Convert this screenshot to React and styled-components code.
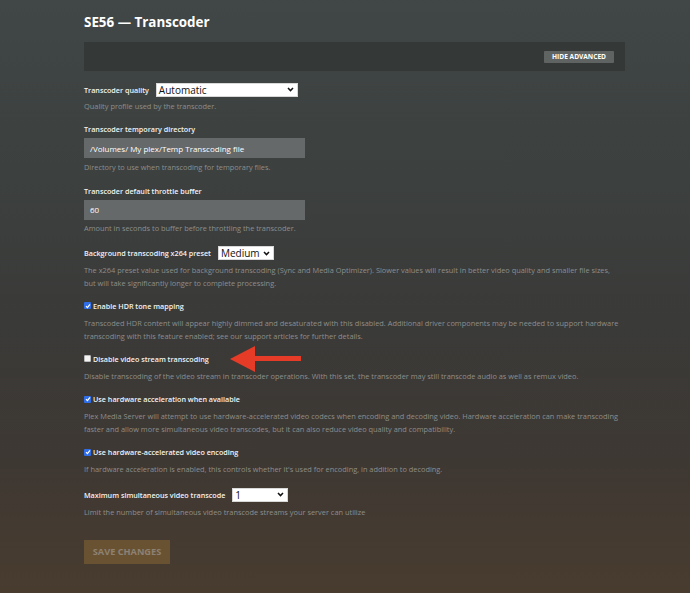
import React from 'react';
import styled, { createGlobalStyle } from 'styled-components';

const GlobalStyle = createGlobalStyle`
  html, body {
    margin: 0;
    padding: 0;
    height: 100%;
  }

  body {
    font-family: 'Open Sans', 'Noto Sans', sans-serif;
    background: #3b3d3b;
  }
`;

const Page = styled.div`
  min-height: 593px;
  box-sizing: border-box;
  padding: 13px 65px 30px 84px;
  background: linear-gradient(180deg, #404746 0%, #3c403f 30%, #3a3a38 55%, #3e3833 78%, #493c2f 100%);
`;

const Title = styled.h1`
  margin: 0;
  font-size: 13.4px;
  line-height: 18px;
  font-weight: 700;
  color: #fff;
`;

const AdvancedBar = styled.div`
  display: flex;
  justify-content: flex-end;
  align-items: center;
  height: 29px;
  margin: 11px 0 11px;
  padding-right: 11px;
  background: #343938;
`;

const SmallButton = styled.button`
  height: 12px;
  padding: 0 8px;
  border: 0;
  border-radius: 1px;
  background: #5f6463;
  color: #fff;
  font-family: inherit;
  font-size: 6.6px;
  font-weight: 700;
  text-transform: uppercase;
  line-height: 12px;
`;

const Setting = styled.div`
  margin-bottom: 11.5px;
`;

const InlineRow = styled.div`
  display: flex;
  align-items: center;
  gap: 7px;
  height: 15px;
`;

const Label = styled.label`
  display: block;
  font-size: 7.2px;
  line-height: 10px;
  font-weight: 600;
  color: #f2f2f2;
`;

const SelectBox = styled.div`
  display: flex;
  align-items: center;
  justify-content: space-between;
  box-sizing: border-box;
  width: ${(p) => p.width}px;
  height: 14px;
  padding: 0 3px 0 2px;
  background: #fff;
  border: 1px solid #d8d8d8;
  color: #111;
  font-size: 10px;
  font-weight: 500;
`;

const Chevron = () => (
  <svg width="7" height="5" viewBox="0 0 7 5">
    <path d="M1 1 L3.5 3.6 L6 1" fill="none" stroke="#111" strokeWidth="1.5" />
  </svg>
);

const TextField = styled.div`
  display: flex;
  align-items: center;
  box-sizing: border-box;
  width: 221px;
  height: 20px;
  margin-top: 4px;
  padding-left: 6px;
  background: #666969;
  color: #fff;
  font-size: 8px;
`;

const Description = styled.p`
  margin: ${(p) => p.gap || 4}px 0 0;
  font-size: 7.4px;
  line-height: 12.75px;
  color: #8d8e8c;
`;

const CheckRow = styled.label`
  display: flex;
  align-items: center;
  gap: 2px;
  height: 10px;
  font-size: 7.2px;
  font-weight: 600;
  color: #f2f2f2;
  position: relative;
`;

const Box = styled.span`
  display: inline-flex;
  align-items: center;
  justify-content: center;
  box-sizing: border-box;
  width: 7px;
  height: 7px;
  border-radius: 1px;
  background: ${(p) => (p.checked ? '#2f6ee8' : '#f4f4f4')};
  border: ${(p) => (p.checked ? 'none' : '1px solid #bbb')};
`;

const Arrow = styled.svg`
  position: absolute;
  left: 146px;
  top: -8px;
`;

const SaveButton = styled.button`
  margin-top: 9px;
  width: 86px;
  height: 24px;
  border: 0;
  background: #695232;
  color: #8d8173;
  font-family: inherit;
  font-size: 9.2px;
  font-weight: 700;
  text-transform: uppercase;
`;

const Checkbox = ({ checked, children, arrow }) => (
  <CheckRow>
    <Box checked={checked}>
      {checked && (
        <svg width="6" height="6" viewBox="0 0 6 6">
          <path d="M1 3.2 L2.4 4.6 L5 1.4" fill="none" stroke="#fff" strokeWidth="1.2" />
        </svg>
      )}
    </Box>
    {children}
    {arrow && (
      <Arrow width="74" height="26" viewBox="0 0 74 26">
        <polygon points="0,13 25,0 25,10 71,10 71,15 25,15 25,26" fill="#e63b26" />
      </Arrow>
    )}
  </CheckRow>
);

const App = () => (
  <>
    <GlobalStyle />
    <Page>
      <Title>SE56 — Transcoder</Title>

      <AdvancedBar>
        <SmallButton>Hide Advanced</SmallButton>
      </AdvancedBar>

      <Setting>
        <InlineRow>
          <Label>Transcoder quality</Label>
          <SelectBox width={142}>
            Automatic
            <Chevron />
          </SelectBox>
        </InlineRow>
        <Description gap={3}>Quality profile used by the transcoder.</Description>
      </Setting>

      <Setting>
        <Label>Transcoder temporary directory</Label>
        <TextField>/Volumes/ My plex/Temp Transcoding file</TextField>
        <Description gap={3}>Directory to use when transcoding for temporary files.</Description>
      </Setting>

      <Setting>
        <Label>Transcoder default throttle buffer</Label>
        <TextField>60</TextField>
        <Description gap={2}>Amount in seconds to buffer before throttling the transcoder.</Description>
      </Setting>

      <Setting>
        <InlineRow>
          <Label>Background transcoding x264 preset</Label>
          <SelectBox width={56}>
            Medium
            <Chevron />
          </SelectBox>
        </InlineRow>
        <Description gap={3}>
          The x264 preset value used for background transcoding (Sync and Media Optimizer). Slower values will result in better video quality and smaller file sizes,
          <br />
          but will take significantly longer to complete processing.
        </Description>
      </Setting>

      <Setting>
        <Checkbox checked>Enable HDR tone mapping</Checkbox>
        <Description gap={6}>
          Transcoded HDR content will appear highly dimmed and desaturated with this disabled. Additional driver components may be needed to support hardware
          <br />
          transcoding with this feature enabled; see our support articles for further details.
        </Description>
      </Setting>

      <Setting>
        <Checkbox arrow>Disable video stream transcoding</Checkbox>
        <Description gap={6}>
          Disable transcoding of the video stream in transcoder operations. With this set, the transcoder may still transcode audio as well as remux video.
        </Description>
      </Setting>

      <Setting>
        <Checkbox checked>Use hardware acceleration when available</Checkbox>
        <Description gap={6}>
          Plex Media Server will attempt to use hardware-accelerated video codecs when encoding and decoding video. Hardware acceleration can make transcoding
          <br />
          faster and allow more simultaneous video transcodes, but it can also reduce video quality and compatibility.
        </Description>
      </Setting>

      <Setting>
        <Checkbox checked>Use hardware-accelerated video encoding</Checkbox>
        <Description gap={6}>
          If hardware acceleration is enabled, this controls whether it's used for encoding, in addition to decoding.
        </Description>
      </Setting>

      <Setting>
        <InlineRow>
          <Label>Maximum simultaneous video transcode</Label>
          <SelectBox width={56}>
            1
            <Chevron />
          </SelectBox>
        </InlineRow>
        <Description gap={4}>Limit the number of simultaneous video transcode streams your server can utilize</Description>
      </Setting>

      <SaveButton>Save Changes</SaveButton>
    </Page>
  </>
);

export default App;
